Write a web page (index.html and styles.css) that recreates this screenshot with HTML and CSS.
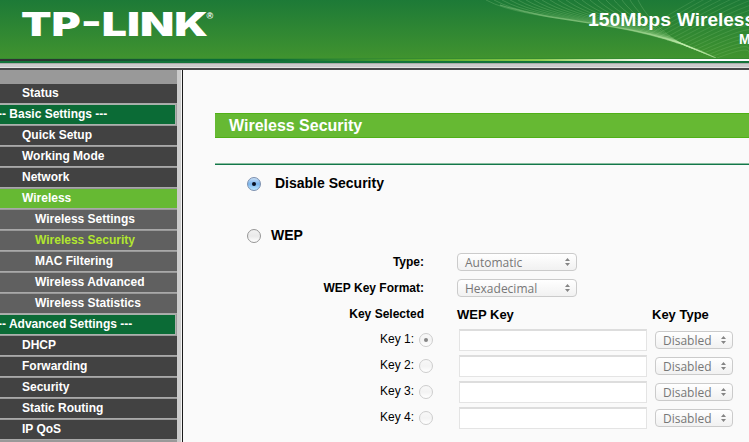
FILE: index.html
```
<!DOCTYPE html>
<html lang="en">
<head>
<meta charset="utf-8">
<title>TP-LINK</title>
<link rel="stylesheet" href="styles.css">
</head>
<body>
<header class="banner">
  <svg class="banner-art" width="749" height="58" viewBox="0 0 749 58">
    <text class="logo" x="21" y="36" textLength="187" lengthAdjust="spacingAndGlyphs">TP-LINK</text>
    <text class="reg" x="206.500" y="19">®</text>
    <g id="waves" class="waves"></g>
    <text class="model" x="588" y="26" textLength="83" lengthAdjust="spacingAndGlyphs">150Mbps</text>
    <text class="model" x="677" y="26">Wireless</text>
    <text class="model-no" x="739" y="44">Model</text>
  </svg>
</header>
<div class="strip"></div>
<div class="strip-edge"></div>
<div class="page">
  <nav class="menu">
    <a>Status</a>
    <a class="group">-- Basic Settings ---</a>
    <a>Quick Setup</a>
    <a>Working Mode</a>
    <a>Network</a>
    <a class="open">Wireless</a>
    <a class="sub">Wireless Settings</a>
    <a class="sub current">Wireless Security</a>
    <a class="sub">MAC Filtering</a>
    <a class="sub">Wireless Advanced</a>
    <a class="sub">Wireless Statistics</a>
    <a class="group">-- Advanced Settings ---</a>
    <a>DHCP</a>
    <a>Forwarding</a>
    <a>Security</a>
    <a>Static Routing</a>
    <a>IP QoS</a>
  </nav>
  <main class="content">
    <h1 class="title"><span>Wireless Security</span></h1>
    <div class="rule"></div>
    <div class="option disable"><i class="radio on"></i><b>Disable Security</b></div>
    <div class="option wep"><i class="radio"></i><b>WEP</b></div>
    <div class="form">
      <div class="row"><b class="label">Type:</b><div class="select wide"><span class="automatic">Automatic</span><svg class="arrows" viewBox="0 0 5 8"><path d="M0 3L2.500 0L5 3zM0 5L2.500 8L5 5z"/></svg></div></div>
      <div class="row"><b class="label">WEP Key Format:</b><div class="select wide"><span>Hexadecimal</span><svg class="arrows" viewBox="0 0 5 8"><path d="M0 3L2.500 0L5 3zM0 5L2.500 8L5 5z"/></svg></div></div>
      <div class="row heads"><b class="label">Key Selected</b><b class="key-head">WEP Key</b><b>Key Type</b></div>
      <div class="row key"><span class="label">Key 1:</span><i class="radio faded dot"></i><div class="field"></div><div class="select"><span>Disabled</span><svg class="arrows" viewBox="0 0 5 8"><path d="M0 3L2.500 0L5 3zM0 5L2.500 8L5 5z"/></svg></div></div>
      <div class="row key"><span class="label">Key 2:</span><i class="radio faded"></i><div class="field"></div><div class="select"><span>Disabled</span><svg class="arrows" viewBox="0 0 5 8"><path d="M0 3L2.500 0L5 3zM0 5L2.500 8L5 5z"/></svg></div></div>
      <div class="row key"><span class="label">Key 3:</span><i class="radio faded"></i><div class="field"></div><div class="select"><span>Disabled</span><svg class="arrows" viewBox="0 0 5 8"><path d="M0 3L2.500 0L5 3zM0 5L2.500 8L5 5z"/></svg></div></div>
      <div class="row key"><span class="label">Key 4:</span><i class="radio faded"></i><div class="field"></div><div class="select"><span>Disabled</span><svg class="arrows" viewBox="0 0 5 8"><path d="M0 3L2.500 0L5 3zM0 5L2.500 8L5 5z"/></svg></div></div>
    </div>
  </main>
</div>
<script src="waves.js"></script>
</body>
</html>
```
FILE: waves.js
```
// Fine crossing curves on the right of the banner.
const waves = document.getElementById('waves');
function curve(d, opacity, width) {
  const p = document.createElementNS('http://www.w3.org/2000/svg', 'path');
  p.setAttribute('d', d);
  p.setAttribute('stroke-opacity', opacity);
  p.setAttribute('stroke-width', width);
  waves.appendChild(p);
}
for (let i = 0; i < 20; i++) {
  const x = 486 + i * 8;
  curve(`M${x} 0C${x + 45 - i * 2} ${24 - i * 0.5} ${625 + i * 2} ${16 + i} ${716 - i * 1.5} ${58 - i * 0.6}`, 0.27, 0.7);
}
for (let i = 0; i < 18; i++) {
  curve(`M${640 + i * 4.5} ${31 + i * 1.6}C${665 + i * 4} ${18 + i * 2} ${700 + i * 3} ${-5 + i * 3} 749 ${-28 + i * 4.8}`, 0.2, 0.7);
}
curve('M500 5C570 27 640 20 716 58', 0.35, 1.3);
```
FILE: styles.css
```
* { box-sizing: border-box; }
body {
  margin: 0;
  height: 442px;
  overflow: hidden;
  background: #fafafa;
  color: #000;
  font-family: "Liberation Sans", Arial, sans-serif;
  font-size: 12px;
}
.banner { height: 58px; background: linear-gradient(#1d7a37, #40932f); }
.banner-art { display: block; fill: #fff; }
.logo { font: 900 33px Inter, sans-serif; }
.reg { font: bold 9px "Liberation Sans", sans-serif; }
.model { font: bold 19px "Liberation Sans", sans-serif; }
.model-no { font: bold 14px "Liberation Sans", sans-serif; }
.waves { fill: none; stroke: #c4edb0; }
.strip {
  height: 5px;
  border-top: 1px solid #358b31;
  border-bottom: 2px solid #13733a;
  background: linear-gradient(90deg, #333034 0, #29372f 50px, #0b6b36 200px, #0b6b36 270px, #5baa2c 430px, #8fcd50 540px, #fff 650px);
}
.strip-edge { height: 7px; background: linear-gradient(#aaa 0 1px, #cbcacb 1px 4px, #e4e4e4 4px 5px, #48484a 5px); }
.page { display: flex; height: 372px; }
.menu {
  display: flex;
  flex-direction: column;
  gap: 2px;
  width: 183px;
  padding: 14px 5px 0 0;
  background: linear-gradient(90deg, #999 0 177px, #cbcbcb 177px 181px, #f4f4f4 181px 182px, #1a1a1a 182px);
}
.menu a {
  flex: none;
  width: 177px;
  height: 19px;
  padding-left: 22px;
  background: #424242;
  box-shadow: 0 1px #a9a9a9;
  color: #fff;
  font-weight: bold;
  line-height: 18px;
  white-space: nowrap;
}
.menu .group { width: 175px; padding-left: 0; text-indent: -2px; background: #0b6b36; box-shadow: 0 0 0 1px #abb2ad; }
.menu .open { background: #66b933; }
.menu .sub { padding-left: 35px; background: #606060; }
.menu .current { color: #b2e62f; }
.content { flex: 1; min-width: 0; padding: 43px 0 0 32px; }
.title {
  height: 25px;
  margin: 0;
  padding-left: 14px;
  border-top: 1px solid #50b017;
  border-bottom: 1px solid #50b017;
  background: #66b933;
  color: #fff;
  font-size: 16px;
  line-height: 24px;
}
.rule { height: 2px; margin-top: 25px; background: linear-gradient(#8abda0 0 1px, #13774a 1px); }
.option { display: flex; align-items: center; height: 16px; padding-left: 32px; font-size: 14px; }
.disable { margin-top: 11px; }
.disable b { margin: -3px 0 0 14px; }
.wep { margin-top: 36px; }
.wep b { margin: -3px 0 0 10px; }
.radio {
  display: grid;
  place-items: center;
  flex: none;
  width: 14px;
  height: 14px;
  border: 1px solid #969696;
  border-radius: 50%;
  background: linear-gradient(#f2f2f2, #e9e9e9 50%, #fff);
}
.radio.on { border-color: #7b8fae; background: linear-gradient(#c8dff6, #79b4ec 50%, #bce8ff); }
.radio.on::after { content: ""; width: 4px; height: 4px; border-radius: 50%; background: #08101f; }
.radio.faded { border-color: #cdcdcd; background: linear-gradient(#f8f8f8, #f3f3f3 50%, #fff); }
.radio.dot::after { content: ""; width: 4px; height: 4px; border-radius: 50%; background: #858585; }
.form { margin-top: 5px; }
.row { display: flex; align-items: center; height: 26px; }
.row .label { width: 209px; margin-right: 33px; text-align: right; }
.heads { font-size: 13px; }
.heads .label { font-size: 12px; }
.key-head { width: 195px; }
.row.key .label { width: 199px; margin: -3px 5px 0 0; }
.field { width: 188px; height: 22px; margin: 0 8px 0 26px; border: 1px solid #e4e4e4; border-top: 2px solid #ddd; background: #fff; }
.select {
  display: flex;
  align-items: center;
  justify-content: space-between;
  width: 78px;
  height: 18px;
  padding: 0 6px 0 7px;
  border: 1px solid #cbcbcb;
  border-radius: 4px;
  background: linear-gradient(#fff, #f8f8f8 50%, #f1f1f1);
  color: #777;
  font: 12px "Open Sans", sans-serif;
}
.wide { width: 120px; }
.arrows { width: 5px; height: 8px; fill: #858585; }
```
